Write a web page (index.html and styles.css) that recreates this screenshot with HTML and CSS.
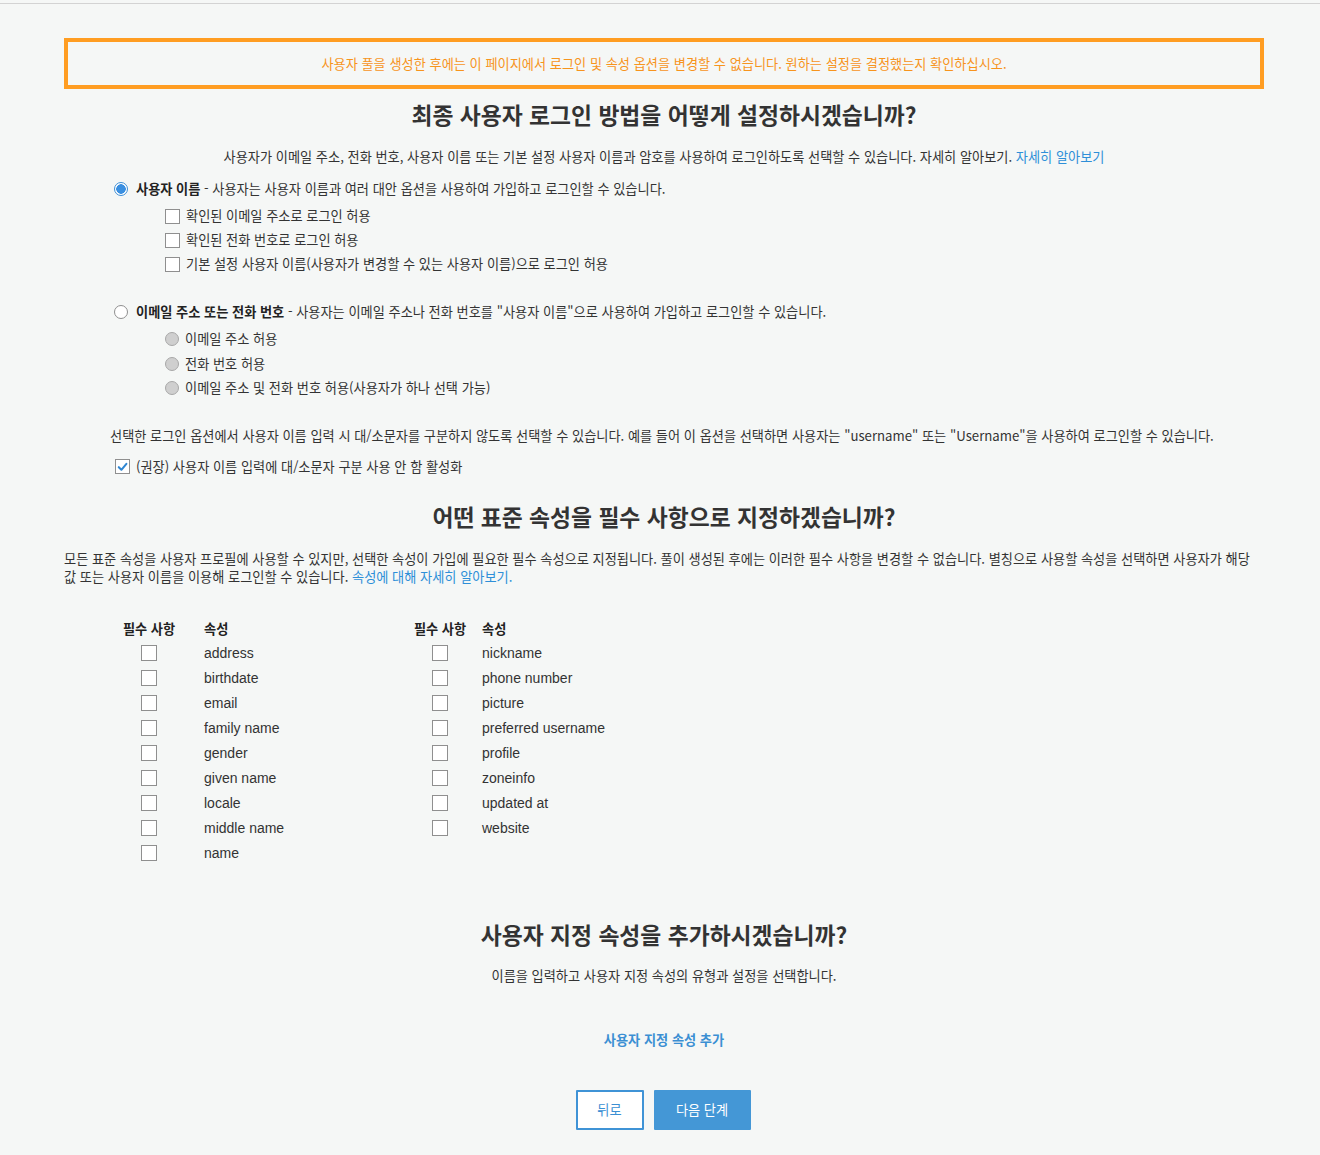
FILE: index.html
```html
<!DOCTYPE html>
<html lang="ko">
<head>
<meta charset="utf-8">
<title>속성</title>
<link rel="stylesheet" href="styles.css">
</head>
<body>
<div class="topbar"></div>
<main class="page">
  <div class="warning">사용자 풀을 생성한 후에는 이 페이지에서 로그인 및 속성 옵션을 변경할 수 없습니다. 원하는 설정을 결정했는지 확인하십시오.</div>

  <h2 class="title t1">최종 사용자 로그인 방법을 어떻게 설정하시겠습니까?</h2>
  <p class="intro">사용자가 이메일 주소, 전화 번호, 사용자 이름 또는 기본 설정 사용자 이름과 암호를 사용하여 로그인하도록 선택할 수 있습니다. 자세히 알아보기. <a class="link" href="#">자세히 알아보기</a></p>

  <div class="option">
    <span class="radio checked"></span>
    <span><b>사용자 이름</b> - 사용자는 사용자 이름과 여러 대안 옵션을 사용하여 가입하고 로그인할 수 있습니다.</span>
  </div>
  <div class="suboptions">
    <div class="sub"><span class="box"></span>확인된 이메일 주소로 로그인 허용</div>
    <div class="sub"><span class="box"></span>확인된 전화 번호로 로그인 허용</div>
    <div class="sub"><span class="box"></span>기본 설정 사용자 이름(사용자가 변경할 수 있는 사용자 이름)으로 로그인 허용</div>
  </div>

  <div class="option opt2">
    <span class="radio"></span>
    <span><b>이메일 주소 또는 전화 번호</b> - 사용자는 이메일 주소나 전화 번호를 "사용자 이름"으로 사용하여 가입하고 로그인할 수 있습니다.</span>
  </div>
  <div class="suboptions subradios">
    <div class="sub"><span class="radio disabled"></span>이메일 주소 허용</div>
    <div class="sub"><span class="radio disabled"></span>전화 번호 허용</div>
    <div class="sub"><span class="radio disabled"></span>이메일 주소 및 전화 번호 허용(사용자가 하나 선택 가능)</div>
  </div>

  <p class="case-note">선택한 로그인 옵션에서 사용자 이름 입력 시 대/소문자를 구분하지 않도록 선택할 수 있습니다. 예를 들어 이 옵션을 선택하면 사용자는 "username" 또는 "Username"을 사용하여 로그인할 수 있습니다.</p>
  <div class="case-check">
    <span class="box on"><svg viewBox="0 0 14 14" width="14" height="14"><path d="M3 7.2 L5.8 10 L11.2 3.6" fill="none" stroke="#2f86d2" stroke-width="2.2" stroke-linecap="round" stroke-linejoin="round"/></svg></span>
    (권장) 사용자 이름 입력에 대/소문자 구분 사용 안 함 활성화
  </div>

  <h2 class="title t2">어떤 표준 속성을 필수 사항으로 지정하겠습니까?</h2>
  <p class="attr-desc">모든 표준 속성을 사용자 프로필에 사용할 수 있지만, 선택한 속성이 가입에 필요한 필수 속성으로 지정됩니다. 풀이 생성된 후에는 이러한 필수 사항을 변경할 수 없습니다. 별칭으로 사용할 속성을 선택하면 사용자가 해당<br>값 또는 사용자 이름을 이용해 로그인할 수 있습니다. <a class="link" href="#">속성에 대해 자세히 알아보기.</a></p>

  <div class="attr-tables">
    <div class="attr-table first">
      <div class="th req">필수 사항</div><div class="th">속성</div>
      <div class="cell"><span class="cbox"></span></div><div class="name">address</div>
      <div class="cell"><span class="cbox"></span></div><div class="name">birthdate</div>
      <div class="cell"><span class="cbox"></span></div><div class="name">email</div>
      <div class="cell"><span class="cbox"></span></div><div class="name">family name</div>
      <div class="cell"><span class="cbox"></span></div><div class="name">gender</div>
      <div class="cell"><span class="cbox"></span></div><div class="name">given name</div>
      <div class="cell"><span class="cbox"></span></div><div class="name">locale</div>
      <div class="cell"><span class="cbox"></span></div><div class="name">middle name</div>
      <div class="cell"><span class="cbox"></span></div><div class="name">name</div>
    </div>
    <div class="attr-table second">
      <div class="th req">필수 사항</div><div class="th">속성</div>
      <div class="cell"><span class="cbox"></span></div><div class="name">nickname</div>
      <div class="cell"><span class="cbox"></span></div><div class="name">phone number</div>
      <div class="cell"><span class="cbox"></span></div><div class="name">picture</div>
      <div class="cell"><span class="cbox"></span></div><div class="name">preferred username</div>
      <div class="cell"><span class="cbox"></span></div><div class="name">profile</div>
      <div class="cell"><span class="cbox"></span></div><div class="name">zoneinfo</div>
      <div class="cell"><span class="cbox"></span></div><div class="name">updated at</div>
      <div class="cell"><span class="cbox"></span></div><div class="name">website</div>
    </div>
  </div>

  <h2 class="title t3">사용자 지정 속성을 추가하시겠습니까?</h2>
  <p class="custom-desc">이름을 입력하고 사용자 지정 속성의 유형과 설정을 선택합니다.</p>
  <div class="add-row"><a class="add-link" href="#">사용자 지정 속성 추가</a></div>

  <div class="buttons">
    <button class="btn btn-back">뒤로</button>
    <button class="btn btn-next">다음 단계</button>
  </div>
</main>
</body>
</html>
```

FILE: styles.css
```css
html, body {
  margin: 0;
  padding: 0;
  background: #f5f7f6;
}
body {
  font-family: "Noto Sans CJK KR", "Noto Sans", sans-serif;
  font-size: 13.2px;
  color: #333;
}
.topbar {
  height: 3px;
  border-bottom: 1px solid #d3d3d3;
}
.page {
  width: 1200px;
  margin-left: 64px;
  padding-top: 34px;
}
.warning {
  height: 43px;
  border: 4px solid #ff9d22;
  color: #f7941d;
  font-size: 13.2px;
  display: flex;
  align-items: center;
  justify-content: center;
}
.title {
  margin: 0;
  text-align: center;
  font-size: 22.8px;
  font-weight: 700;
  color: #333;
  line-height: 30px;
}
.t1 { margin-top: 11px; }
.intro {
  margin: 18px 0 0;
  text-align: center;
  line-height: 18px;
}
.link { color: #2e8fd8; text-decoration: none; }

.option {
  display: flex;
  align-items: center;
  gap: 8px;
  margin: 14px 0 0 50px;
  line-height: 18px;
}
.opt2 { margin-top: 27px; }
.option b { font-weight: 700; color: #222; }

.radio {
  width: 12px;
  height: 12px;
  border-radius: 50%;
  border: 1px solid #8f8f8f;
  background: #fff;
  flex: none;
  box-sizing: content-box;
}
.radio.checked {
  border-color: #3e8fd6;
  background: radial-gradient(circle, #3a8fe0 0 4.5px, #fff 5px);
}
.radio.disabled {
  background: #cfcfcf;
  border-color: #a8a8a8;
}

.suboptions {
  margin: 6px 0 0 101px;
}
.sub {
  display: flex;
  align-items: center;
  gap: 6px;
  height: 24px;
  line-height: 18px;
}
.subradios .sub { height: 24.5px; }
.box {
  width: 13px;
  height: 13px;
  border: 1px solid #8f8f8f;
  background: #fff;
  flex: none;
  display: inline-flex;
  align-items: center;
  justify-content: center;
}
.box svg { display: block; }

.case-note {
  margin: 26px 0 0 46px;
  line-height: 18px;
}
.case-check {
  display: flex;
  align-items: center;
  gap: 6px;
  margin: 13px 0 0 51px;
  line-height: 18px;
}

.t2 { margin-top: 26px; }
.attr-desc {
  margin: 18px 0 0;
  line-height: 18px;
}

.attr-tables {
  display: flex;
  margin: 31px 0 0 50px;
}
.attr-table {
  display: grid;
  grid-template-columns: 70px auto;
  grid-template-rows: 24px;
  grid-auto-rows: 25px;
  align-items: center;
  align-content: start;
}
.attr-table.first { width: 291px; column-gap: 20px; }
.attr-table.second { column-gap: 7px; }
.th {
  font-weight: 700;
  color: #222;
  line-height: 18px;
}
.th.req { text-align: center; }
.cell { display: flex; justify-content: center; }
.cbox {
  width: 14px;
  height: 14px;
  border: 1px solid #8f8f8f;
  background: #fff;
}
.name {
  font-family: "Liberation Sans", Arial, sans-serif;
  font-size: 14px;
  color: #333;
}

.t3 { margin-top: 54px; }
.custom-desc {
  margin: 17px 0 0;
  text-align: center;
  line-height: 18px;
}
.add-row {
  text-align: center;
  margin-top: 46px;
  line-height: 18px;
}
.add-link {
  color: #3b8fd3;
  font-weight: 700;
  text-decoration: none;
}
.buttons {
  display: flex;
  justify-content: center;
  gap: 10px;
  margin-top: 41px;
  padding-right: 2px;
}
.btn {
  height: 40px;
  font-family: "Noto Sans CJK KR", "Noto Sans", sans-serif;
  font-size: 13.2px;
  border-radius: 1px;
  cursor: pointer;
}
.btn-back {
  width: 68px;
  background: #fff;
  color: #3b8fd3;
  border: 2px solid #3f93d6;
}
.btn-next {
  width: 97px;
  background: #4497d6;
  color: #fff;
  border: none;
}
```
